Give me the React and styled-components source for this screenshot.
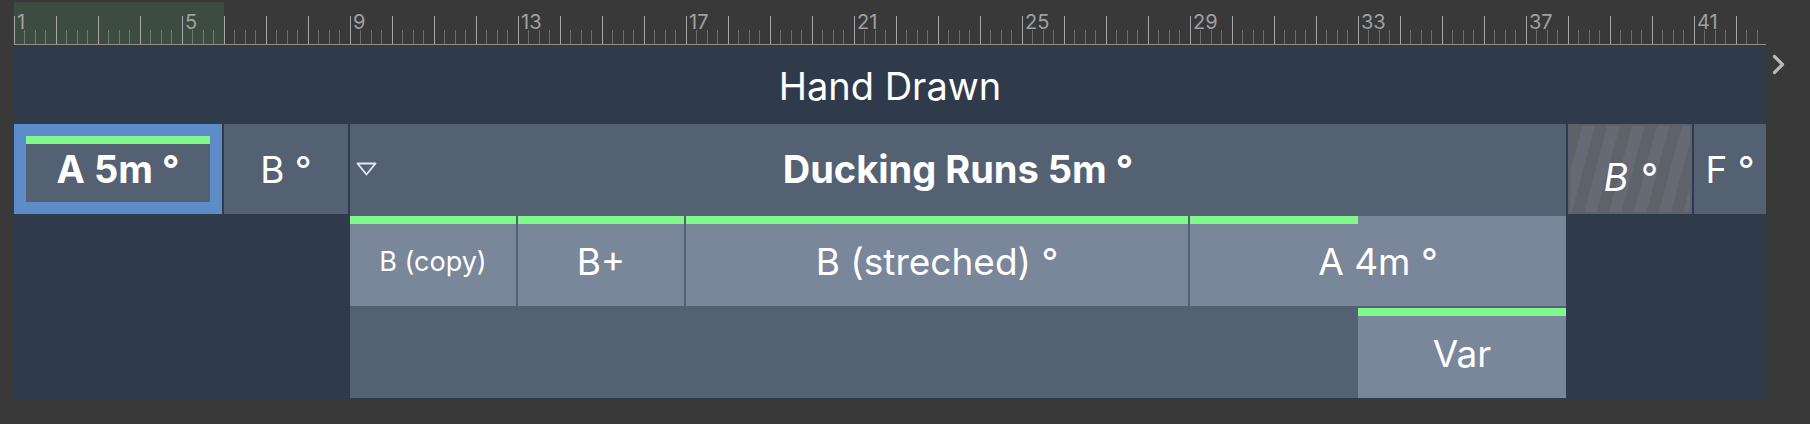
import React from "react";
import styled, { createGlobalStyle, css } from "styled-components";

const BEAT = 42;

const GlobalStyle = createGlobalStyle`
  html, body {
    margin: 0;
    padding: 0;
    background: #393939;
  }
  body {
    font-family: Inter, "Noto Sans", "Liberation Sans", sans-serif;
  }
`;

const Page = styled.div`
  display: flex;
  width: 1810px;
  height: 424px;
  padding-left: 14px;
  box-sizing: border-box;
  background: #393939;
  overflow: hidden;
`;

const Main = styled.div`
  flex: 0 0 1752px;
  width: 1752px;
  min-width: 0;
  overflow: hidden;
`;

const Side = styled.div`
  padding: 54px 0 0 6px;
`;

const Ruler = styled.div`
  display: flex;
  margin-top: 2px;
  height: 42px;
  border-bottom: 1px solid #8f8f8f;
  overflow: hidden;
`;

const Beat = styled.div`
  flex: 0 0 ${BEAT}px;
  box-sizing: border-box;
  padding: 10px 0 0 3px;
  color: #a0a0a0;
  font-size: 20px;
  line-height: 20px;
  background-color: ${(p) => (p.$hl ? "#3c4c41" : "transparent")};
  background-image: linear-gradient(#a8a8a8, #a8a8a8),
    linear-gradient(rgba(255, 255, 255, 0.26), rgba(255, 255, 255, 0.26)),
    linear-gradient(rgba(255, 255, 255, 0.26), rgba(255, 255, 255, 0.26)),
    linear-gradient(rgba(255, 255, 255, 0.26), rgba(255, 255, 255, 0.26));
  background-size: 1px 28px, 1px 14px, 1px 14px, 1px 14px;
  background-position: 0 100%, 10px 100%, 21px 100%, 31px 100%;
  background-repeat: no-repeat;
`;

const Track = styled.div`
  margin-top: 3px;
  background: #2f3b4b;
  padding-bottom: 2px;
`;

const TrackName = styled.div`
  height: 76px;
  display: flex;
  align-items: center;
  justify-content: center;
  color: #fff;
  font-size: 38px;
`;

const Lane = styled.div`
  display: flex;
  align-items: flex-start;
  gap: 2px;
  overflow: hidden;
`;

const Clip = styled.div`
  position: relative;
  flex: ${(p) => (p.$beats ? `0 0 ${p.$beats * BEAT - 2}px` : "1 1 0")};
  min-width: 0;
  height: 90px;
  box-sizing: border-box;
  display: flex;
  align-items: center;
  justify-content: center;
  background: ${(p) => (p.$light ? "#7a8699" : "#536173")};
  color: #fff;
  font-size: ${(p) => p.$size || 37}px;
  font-weight: ${(p) => (p.$bold ? 700 : 400)};
  white-space: nowrap;
  overflow: hidden;
  ${(p) =>
    p.$selected &&
    css`
      border: 12px solid #5e8cc9;
    `}
  ${(p) =>
    p.$muted &&
    css`
      border: 2px solid #5a6170;
      padding-top: 16px;
      font-style: italic;
      background: repeating-linear-gradient(
        105deg,
        #5e6269 0 12px,
        #656a74 12px 24px
      );
    `}
`;

const Marker = styled.div`
  position: absolute;
  top: 0;
  left: 0;
  height: 8px;
  width: ${(p) => (p.$beats ? `${p.$beats * BEAT}px` : "100%")};
  background: #7ff98c;
`;

const Group = styled.div`
  flex: 0 0 ${29 * BEAT - 2}px;
  background: #536173;
  color: #fff;
`;

const GroupHead = styled.div`
  height: 90px;
  display: grid;
  grid-template-columns: 1fr auto 1fr;
  align-items: center;
  font-size: 38px;
  font-weight: 700;
  white-space: nowrap;
`;

const Fold = styled.svg`
  justify-self: start;
  margin-left: 6px;
`;

const SubLane = styled.div`
  display: flex;
  gap: 2px;
  padding-top: 2px;
  padding-left: ${(p) => (p.$offset || 0) * BEAT}px;
`;

const beats = Array.from({ length: 42 }, (_, i) => i);

const children = [
  { name: "B (copy)", beats: 4, size: 27, marker: true },
  { name: "B+", beats: 4, marker: true },
  { name: "B (streched) °", beats: 12, marker: true },
  { name: "A 4m °", beats: 9, marker: 4 },
];

export default function App() {
  return (
    <>
      <GlobalStyle />
      <Page>
        <Main>
          <Ruler>
            {beats.map((b) => (
              <Beat key={b} $hl={b < 5}>
                {b % 4 === 0 ? b + 1 : null}
              </Beat>
            ))}
          </Ruler>
          <Track>
            <TrackName>Hand Drawn</TrackName>
            <Lane>
              <Clip $beats={5} $selected $bold $size={38}>
                <Marker />
                A 5m °
              </Clip>
              <Clip $beats={3}>B °</Clip>
              <Group>
                <GroupHead>
                  <Fold width="21" height="14" viewBox="0 0 21 14">
                    <polygon
                      points="1.5,1.5 19.5,1.5 10.5,12.5"
                      fill="none"
                      stroke="#e4e7ec"
                      strokeWidth="1.8"
                      strokeLinejoin="round"
                    />
                  </Fold>
                  <span>Ducking Runs 5m °</span>
                  <span />
                </GroupHead>
                <SubLane>
                  {children.map((c) => (
                    <Clip key={c.name} $beats={c.beats} $light $size={c.size}>
                      <Marker $beats={c.marker === true ? 0 : c.marker} />
                      {c.name}
                    </Clip>
                  ))}
                </SubLane>
                <SubLane $offset={24}>
                  <Clip $beats={5} $light>
                    <Marker />
                    Var
                  </Clip>
                </SubLane>
              </Group>
              <Clip $beats={3} $muted $size={38}>
                B °
              </Clip>
              <Clip>F °</Clip>
            </Lane>
          </Track>
        </Main>
        <Side>
          <svg width="13" height="21" viewBox="0 0 13 21">
            <polyline
              points="2.5,2.5 10.5,10.5 2.5,18.5"
              fill="none"
              stroke="#b8b8b8"
              strokeWidth="3.2"
              strokeLinecap="round"
              strokeLinejoin="round"
            />
          </svg>
        </Side>
      </Page>
    </>
  );
}
